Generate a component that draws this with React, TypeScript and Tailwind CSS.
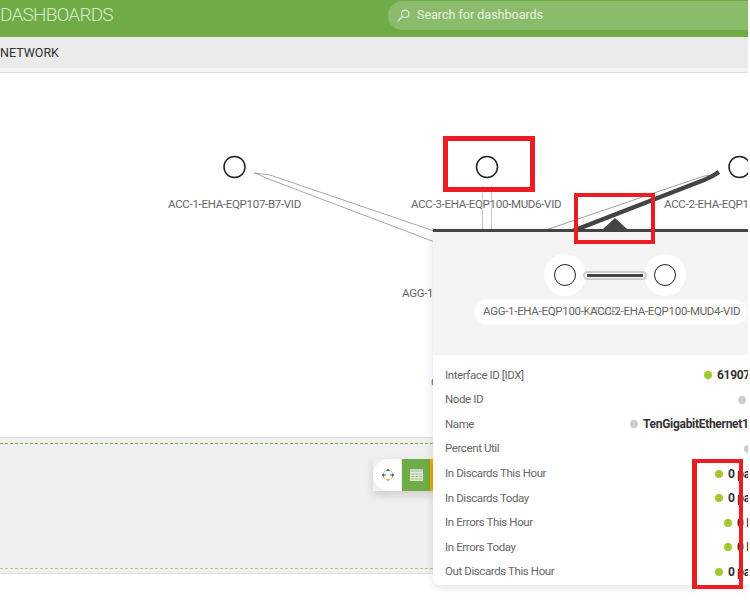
const font = "font-['Roboto',sans-serif]"
const glow = "[text-shadow:0_0_3px_white,0_0_3px_white,0_0_5px_white,0_0_6px_white]"

const nodeLabels = [
  { text: "ACC-1-EHA-EQP107-B7-VID", pos: "left-[168px] top-[123px]" },
  { text: "ACC-3-EHA-EQP100-MUD6-VID", pos: "left-[411px] top-[123px]" },
  { text: "ACC-2-EHA-EQP100-MUD4-VID", pos: "left-[664px] top-[123px]" },
  { text: "AGG-1-EHA-EQP100-KIT-VID", pos: "left-[402px] top-[212px]" },
  { text: "CORE-1", pos: "left-[431px] top-[301px]" },
]

const rows = [
  { label: "Interface ID [IDX]", value: "61907", on: true, width: "w-[259px]" },
  { label: "Node ID", value: "", on: false, width: "w-[293px]" },
  { label: "Name", value: "TenGigabitEthernet1/0/1", on: false, width: "w-[185px]" },
  { label: "Percent Util", value: "", on: false, width: "w-[299px]" },
  { label: "In Discards This Hour", value: "0 packets", on: true, width: "w-[270px]" },
  { label: "In Discards Today", value: "0 packets", on: true, width: "w-[270px]" },
  { label: "In Errors This Hour", value: "0 Errors", on: true, width: "w-[279px]" },
  { label: "In Errors Today", value: "0 Errors", on: true, width: "w-[279px]" },
  { label: "Out Discards This Hour", value: "0 packets", on: true, width: "w-[270px]" },
]

function NetworkLinks() {
  return (
    <svg className="absolute inset-0 h-full w-full" viewBox="0 73 748 364" fill="none">
      <path d="M254 173 L270 175 L440 233 M254 173 L260 175 Q263 177 266 178 L440 244" stroke="#a8a8a8" />
      <path d="M482.500 186 V232 M491.500 186 V232" stroke="#c4c4c4" />
      <path d="M540 232 L698 178 Q704 175.500 712 175" stroke="#a0a0a0" />
      <path d="M570 232 L704 180 Q712 177 719 172" stroke="#444444" strokeWidth="4.500" />
      <circle cx="234.500" cy="167" r="10.500" stroke="#222222" strokeWidth="1.500" />
      <circle cx="487" cy="167" r="10.500" stroke="#222222" strokeWidth="1.500" />
      <circle cx="739.500" cy="167" r="10.500" stroke="#222222" strokeWidth="1.500" />
    </svg>
  )
}

function SearchGlyph() {
  return (
    <svg width="13" height="13" viewBox="0 0 13 13" fill="none" stroke="#e8f1e0" strokeWidth="1.100">
      <circle cx="8.200" cy="4.800" r="3.700" />
      <path d="M5.500 7.500 L1 12" />
    </svg>
  )
}

function MoveIcon() {
  return (
    <svg width="14" height="14" viewBox="0 0 14 14" fill="none">
      <path d="M7 0.500 L5 3 H9 Z" fill="#3d5f8f" />
      <path d="M7 13.500 L5 11 H9 Z" fill="#e8a33a" />
      <path d="M0.500 7 L3 5 V9 Z" fill="#3d5f8f" />
      <path d="M13.500 7 L11 5 V9 Z" fill="#3d5f8f" />
      <path d="M3 7 H5 M9 7 H11" stroke="#3d5f8f" />
      <path d="M4.500 2.500 L2.500 4.500 M9.500 2.500 L11.500 4.500 M4.500 11.500 L2.500 9.500 M9.500 11.500 L11.500 9.500" stroke="#e3b778" />
    </svg>
  )
}

function TableIcon() {
  return (
    <svg width="13" height="12" viewBox="0 0 13 12">
      <rect width="13" height="12" fill="#dfe8d8" />
      <rect width="13" height="3" fill="#c8cec4" />
      <path d="M1 5 H12 M1 7.500 H12 M1 10 H12" stroke="#9dbb84" strokeDasharray="3 1" />
      <path d="M1 7.500 H12" stroke="#c9d23c" strokeDasharray="1 3" />
    </svg>
  )
}

function Popover() {
  return (
    <div className="absolute left-[433px] top-[229px] z-10 w-[340px] rounded-b-md bg-white shadow-[0_2px_10px_rgba(0,0,0,0.12)]">
      {/* pointer above the bar */}
      <div className="absolute -top-[11px] left-[170px] h-0 w-0 border-x-[12px] border-b-[11px] border-x-transparent border-b-[#444444]" />
      <div className="h-[126px] border-t-[3px] border-[#444444] bg-[#f4f4f4]">
        <div className="flex items-center pl-[111px] pt-[22px]">
          <div className="flex h-[42px] w-[42px] items-center justify-center rounded-full bg-white">
            <div className="h-[22px] w-[22px] rounded-full border-[1.5px] border-[#222222]" />
          </div>
          <div className="relative z-10 -mx-[3px] flex h-[9px] w-[64px] items-center rounded-full border-2 border-[#cccccc] bg-white px-[2px]">
            <div className="h-[3px] w-full bg-[#444444]" />
          </div>
          <div className="flex h-[42px] w-[42px] items-center justify-center rounded-full bg-white">
            <div className="h-[22px] w-[22px] rounded-full border-[1.5px] border-[#222222]" />
          </div>
        </div>
        <div className="ml-[42px] mt-[4px] flex h-[24px] w-[272px] items-center whitespace-nowrap rounded-full bg-white pl-[8px] text-[11.500px] tracking-[-0.3px] text-[#666666] shadow-[0_0_5px_white]">
          <span className="w-[107px]">AGG-1-EHA-EQP100-KIT-VID</span>
          <span className={`relative ${glow}`}>ACC-2-EHA-EQP100-MUD4-VID</span>
        </div>
      </div>
      <div className="pb-[1px] pl-[12px] pt-[8px]">
        {rows.map((row) => (
          <div key={row.label} className="flex h-[24.600px] items-center whitespace-nowrap">
            <span className={`${row.width} shrink-0 text-[11.500px] tracking-[-0.4px] text-[#666666]`}>{row.label}</span>
            <span className={`h-[8px] w-[8px] shrink-0 rounded-full ${row.on ? "bg-[#a4c92f]" : "bg-[#cccccc]"}`} />
            <span className="ml-[5px] text-[12px] font-bold tracking-[-0.3px] text-[#333333]">{row.value}</span>
          </div>
        ))}
      </div>
    </div>
  )
}

export default function App() {
  return (
    <div className={`relative h-[616px] w-[748px] overflow-hidden bg-white ${font}`}>
      {/* Top bar */}
      <header className="flex h-[37px] items-start justify-between bg-[#6fac46]">
        <h1 className="text-[19px] font-light leading-[30px] tracking-[-0.8px] text-[#dbe9d0]">DASHBOARDS</h1>
        <div className="mt-px flex h-[29px] w-[360px] items-center gap-[7px] rounded-l-full bg-[#8bbc6b] pl-[9px] text-[12.500px] text-[#e8f1e0]">
          <SearchGlyph />
          <span>Search for dashboards</span>
        </div>
      </header>

      {/* Sub nav */}
      <nav className="h-[36px] border-b border-[#dddddd] bg-[#f3f3f3]">
        <div className="flex h-[31px] items-center bg-[#ebebeb] pt-px text-[12.500px] text-[#333333]">NETWORK</div>
      </nav>

      {/* Diagram */}
      <section className="relative h-[364px]">
        <NetworkLinks />
        {nodeLabels.map((node) => (
          <span key={node.text} className={`absolute ${node.pos} whitespace-nowrap text-[11.500px] leading-4 tracking-[-0.3px] text-[#666666] ${glow}`}>
            {node.text}
          </span>
        ))}
      </section>

      {/* Lower panel */}
      <section className="h-[137px] border-y border-[#dcdcdc] bg-[#f0f0f0] pb-[4px] pt-[5px]">
        <div className="relative h-[126px] border-y border-dashed border-b-[#a9cc8f] border-t-[#7fb25c]">
          <div className="absolute left-[373px] top-[15px] flex h-[32px] shadow-[0_4px_10px_rgba(0,0,0,0.15)]">
            <div className="flex w-[28px] items-center justify-center rounded-l-full bg-white pl-[2px]">
              <MoveIcon />
            </div>
            <div className="ml-px flex w-[28px] items-center justify-center bg-[#6fac46]">
              <TableIcon />
            </div>
            <div className="w-[4px] bg-[#f0a800]" />
          </div>
        </div>
      </section>

      <Popover />

      {/* Red annotation boxes */}
      <div className="absolute left-[443px] top-[136px] z-20 h-[56px] w-[92px] border-[5px] border-[#ed1c24]" />
      <div className="absolute left-[574px] top-[193px] z-20 h-[51px] w-[81px] border-[4px] border-[#ed1c24]" />
      <div className="absolute left-[692px] top-[459px] z-20 h-[130px] w-[51px] border-[4px] border-l-[5px] border-[#ed1c24]" />
    </div>
  )
}
